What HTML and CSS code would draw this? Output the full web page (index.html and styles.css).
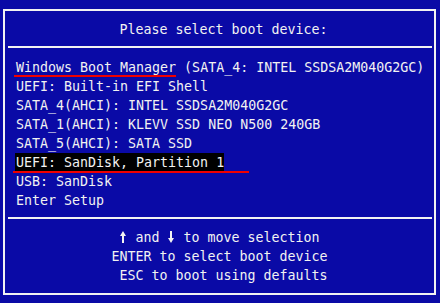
FILE: index.html
```html
<!DOCTYPE html>
<html lang="en">
<head>
    <meta charset="UTF-8">
    <title>Boot Menu</title>
    <link rel="stylesheet" href="styles.css">
</head>
<body>
    <div class="frame">
        <div class="header"> Please select boot device:</div>
        <div class="rule"></div>

        <ul class="devices">
            <li><span class="mark mark-wbm">Windows Boot Manager</span> (SATA_4: INTEL SSDSA2M040G2GC)</li>
            <li>UEFI: Built-in EFI Shell</li>
            <li>SATA_4(AHCI): INTEL SSDSA2M040G2GC</li>
            <li>SATA_1(AHCI): KLEVV SSD NEO N500 240GB</li>
            <li>SATA_5(AHCI): SATA SSD</li>
            <li class="selected"><span class="mark mark-usb">UEFI: SanDisk, Partition 1</span></li>
            <li>USB: SanDisk</li>
            <li>Enter Setup</li>
        </ul>

        <div class="rule"></div>

        <div class="help">
            <p><svg class="arrow" viewBox="0 0 8 12"><path d="M4 0 L7 5 L5 5 L5 12 L3 12 L3 5 L1 5 Z"/></svg> and <svg class="arrow" viewBox="0 0 8 12"><path d="M4 12 L7 7 L5 7 L5 0 L3 0 L3 7 L1 7 Z"/></svg> to move selection</p>
            <p>ENTER to select boot device</p>
            <p> ESC to boot using defaults</p>
        </div>
    </div>
</body>
</html>
```

FILE: styles.css
```css
body {
    margin: 0;
    background-color: #0a0aa6;
    color: #f2f2f2;
    font-family: "DejaVu Sans Mono", monospace;
    font-size: 13.3px;
    width: 440px;
    height: 303px;
    overflow: hidden;
}
.frame {
    margin: 9px 4px 8px 3px;
    height: 282px;
    border: 2px solid #f2f2f2;
}
.header {
    text-align: center;
    white-space: pre;
    line-height: 19px;
    padding: 9px 0 7px;
}
.rule {
    height: 2px;
    margin: 0 2px 0 3px;
    background-color: #f2f2f2;
}
.devices {
    list-style: none;
    margin: 0;
    padding: 10px 0 7px 11px;
}
.devices li {
    line-height: 19px;
    height: 19px;
    white-space: pre;
}
.selected span {
    display: inline-block;
    background-color: #000;
    padding-left: 1px;
    margin-left: -1px;
}
.mark {
    position: relative;
}
.mark::after {
    content: "";
    position: absolute;
    left: -2px;
    height: 2px;
    background-color: #f00000;
}
.mark-wbm::after {
    top: 15px;
    width: 162px;
}
.mark-usb::after {
    top: 18px;
    width: 236px;
}
.help {
    text-align: center;
    line-height: 19px;
    padding-top: 9px;
}
.help p {
    margin: 0;
    white-space: pre;
}
.arrow {
    width: 8px;
    height: 12px;
    fill: #f2f2f2;
    vertical-align: -1px;
}
```
